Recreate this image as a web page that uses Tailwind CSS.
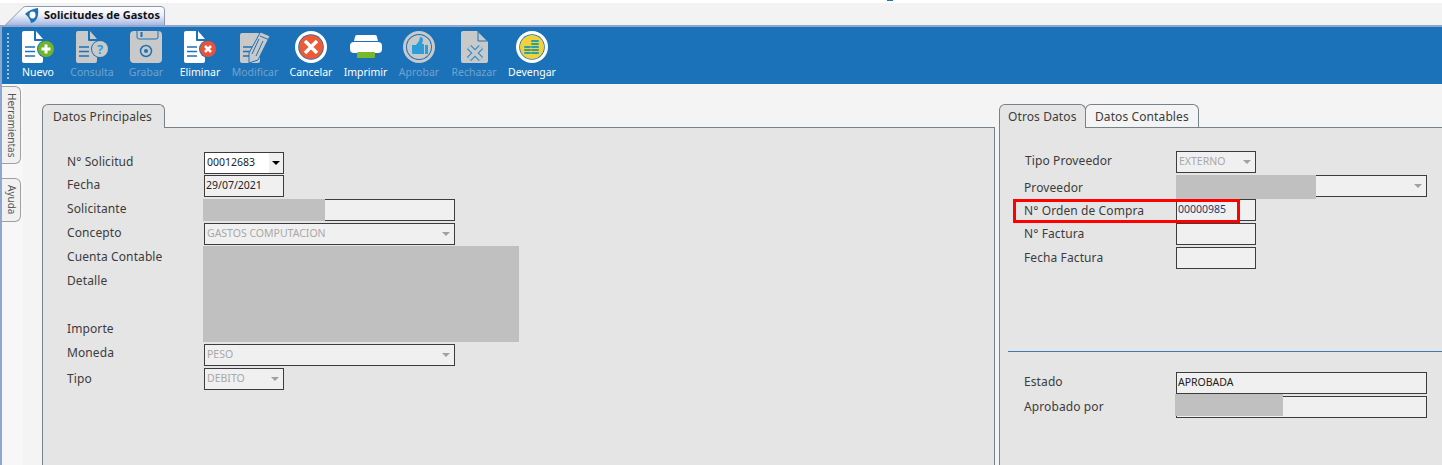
<!DOCTYPE html>
<html lang="es">
<head>
  <meta charset="UTF-8" />
  <title>Solicitudes de Gastos</title>
  <script src="https://cdn.jsdelivr.net/npm/@tailwindcss/browser@4"></script>
</head>
<body class="w-[1442px] h-[465px] overflow-hidden bg-[#f4f4f4] font-['Noto_Sans',sans-serif] text-[12px] tracking-[0.1px] text-[#3c3c3c]">

  <!-- tab strip -->
  <div class="relative h-[25px] border-t-[3px] border-white pl-[5px] pt-[3px] bg-[#f3f3f3]">
    <div class="absolute left-[887px] -top-[3px] w-[6px] h-[1px] bg-[#1c72b8]"></div>
    <div class="relative w-[161px] h-[19px] flex items-center pl-[20px] gap-[5px]">
      <svg class="absolute left-0 top-0" width="161" height="19" viewBox="0 0 161 19">
        <defs><linearGradient id="tabfill" x1="0" y1="0" x2="0" y2="1"><stop offset="0" stop-color="#ffffff"/><stop offset="0.45" stop-color="#eef1fa"/><stop offset="1" stop-color="#a6b9e4"/></linearGradient></defs>
        <path d="M0.5 19 L18 1.5 Q19 0.5 21 0.5 H156 Q159.5 0.5 159.5 4 V19" fill="url(#tabfill)" stroke="#8c98a8"/>
      </svg>
      <svg class="relative" width="14" height="16" viewBox="0 0 14 16"><path d="M0 6 Q5 1 13 0 Q14 8 11 12 Q9 15 6 15 Q5 10 0 6 Z" fill="#1c72b8"/><ellipse cx="7.500" cy="7" rx="3" ry="3.400" fill="#fff"/></svg>
      <span class="relative font-bold text-[#111] text-[11px] tracking-normal whitespace-nowrap">Solicitudes de Gastos</span>
    </div>
  </div>

  <div class="border-l-2 border-[#8fa6d0] border-t-2 border-t-[#8fa6d0] h-[440px]">
    <!-- toolbar -->
    <div class="h-[57px] bg-[#1c72b8] flex pl-[5px] pt-[3px] text-[10.5px] tracking-normal leading-[14px] text-white">
      <div class="w-[3px] h-[46px] mt-[3px] mr-[1px] border-l-2 border-dotted border-[#9cc0dd]"></div>
      <div class="w-[54px] flex flex-col items-center">
        <svg width="40" height="35" viewBox="0 0 40 35"><path d="M6 1h10v9a1 1 0 0 0 1 1h8v20a2 2 0 0 1-2 2H6a2 2 0 0 1-2-2V3a2 2 0 0 1 2-2z" fill="#fff"/><path d="M18 1l7 8h-7z" fill="#fff"/><path d="M7 17h10M7 21.500h10M7 26h10" stroke="#1c72b8" stroke-width="1.500"/><circle cx="28" cy="19" r="9" fill="#1c72b8"/><circle cx="28" cy="19" r="8" fill="#6fb52c"/><path d="M28 14.500v9M23.500 19h9" stroke="#fff" stroke-width="3"/></svg>
        <span>Nuevo</span>
      </div>
      <div class="w-[54px] flex flex-col items-center text-[#6fa3cf]">
        <svg width="40" height="35" viewBox="0 0 40 35"><path d="M6 1h10v9a1 1 0 0 0 1 1h8v20a2 2 0 0 1-2 2H6a2 2 0 0 1-2-2V3a2 2 0 0 1 2-2z" fill="#c9c9c9"/><path d="M18 1l7 8h-7z" fill="#c9c9c9"/><path d="M7 17h10M7 21.500h10M7 26h10" stroke="#1c72b8" stroke-width="1.500"/><circle cx="28" cy="19" r="9" fill="#1c72b8"/><circle cx="28" cy="19" r="8" fill="#c9c9c9"/><text x="28" y="23.500" font-size="13" font-weight="bold" fill="#2b9fdc" text-anchor="middle">?</text></svg>
        <span>Consulta</span>
      </div>
      <div class="w-[54px] flex flex-col items-center text-[#6fa3cf]">
        <svg width="40" height="35" viewBox="0 0 40 35"><path d="M8 1h24a4 4 0 0 1 4 4v24a4 4 0 0 1-4 4H8a4 4 0 0 1-4-4V5a4 4 0 0 1 4-4z" fill="#c9c9c9"/><path d="M11 1v6a2 2 0 0 0 2 2h17a2 2 0 0 0 2-2V1" fill="none" stroke="#1c72b8"/><rect x="14.500" y="2" width="2" height="5" fill="#1c72b8"/><circle cx="20" cy="21" r="5.500" fill="none" stroke="#1c72b8" stroke-width="1.500"/><circle cx="20" cy="21" r="2" fill="#1c72b8"/></svg>
        <span>Grabar</span>
      </div>
      <div class="w-[54px] flex flex-col items-center">
        <svg width="40" height="35" viewBox="0 0 40 35"><path d="M6 1h10v9a1 1 0 0 0 1 1h8v20a2 2 0 0 1-2 2H6a2 2 0 0 1-2-2V3a2 2 0 0 1 2-2z" fill="#fff"/><path d="M18 1l7 8h-7z" fill="#fff"/><path d="M7 17h10M7 21.500h10M7 26h10" stroke="#1c72b8" stroke-width="1.500"/><circle cx="28" cy="19" r="9" fill="#1c72b8"/><circle cx="28" cy="19" r="8" fill="#e8533a"/><path d="M25 16l6 6M31 16l-6 6" stroke="#fff" stroke-width="2.500"/></svg>
        <span>Eliminar</span>
      </div>
      <div class="w-[56px] flex flex-col items-center text-[#6fa3cf]">
        <svg width="40" height="35" viewBox="0 0 40 35"><path d="M7 3h16a2 2 0 0 1 2 2v26a2 2 0 0 1-2 2H7a2 2 0 0 1-2-2V5a2 2 0 0 1 2-2z" fill="#c9c9c9"/><path d="M8 17h9M8 21.500h9M8 26h9" stroke="#1c72b8" stroke-width="1.500"/><path d="M25.500 2l9.500 4-12 24-9 3 0-10z" fill="#c9c9c9" stroke="#1c72b8"/><path d="M25 6l8.500 3.500M24 9l-7 15M28 11l-7 15" stroke="#1c72b8" fill="none"/></svg>
        <span>Modificar</span>
      </div>
      <div class="w-[56px] flex flex-col items-center">
        <svg width="40" height="35" viewBox="0 0 40 35"><circle cx="20" cy="17" r="16" fill="#fff"/><circle cx="20" cy="17" r="12.800" fill="#1c72b8"/><circle cx="20" cy="17" r="12" fill="#ee5a35"/><path d="M14 11l12 12M26 11l-12 12" stroke="#fff" stroke-width="3.500"/></svg>
        <span>Cancelar</span>
      </div>
      <div class="w-[53px] flex flex-col items-center">
        <svg width="40" height="35" viewBox="0 0 40 35"><path d="M9 7a2 2 0 0 1 2-2h18a2 2 0 0 1 2 2l1 4H8z" fill="#fff"/><rect x="4" y="12" width="32" height="11" rx="4" fill="#fff"/><rect x="11" y="22" width="18" height="6" rx="1" fill="#78b82a"/></svg>
        <span>Imprimir</span>
      </div>
      <div class="w-[54px] flex flex-col items-center text-[#6fa3cf]">
        <svg width="40" height="35" viewBox="0 0 40 35"><circle cx="20" cy="17" r="14.500" fill="none" stroke="#c9c9c9" stroke-width="3"/><circle cx="20" cy="17" r="12" fill="#c9c9c9"/><path d="M13 15h4l3-4 1-4c2 0 3 1 3 3l-1 4h2v10H14a1 1 0 0 1-1-1z" fill="#2b9fdc"/><rect x="26" y="15" width="3" height="9" fill="#2b9fdc"/></svg>
        <span>Aprobar</span>
      </div>
      <div class="w-[56px] flex flex-col items-center text-[#6fa3cf]">
        <svg width="40" height="35" viewBox="0 0 40 35"><path d="M9 1h14l11 11v19a2 2 0 0 1-2 2H9a2 2 0 0 1-2-2V3a2 2 0 0 1 2-2z" fill="#c9c9c9"/><path d="M24 2v9h9" fill="none" stroke="#1c72b8"/><path d="M15 17l12 12M27 17l-12 12" stroke="#2b8fd0" stroke-width="6"/><path d="M15 17l12 12M27 17l-12 12" stroke="#c9c9c9" stroke-width="3.500"/></svg>
        <span>Rechazar</span>
      </div>
      <div class="w-[60px] flex flex-col items-center">
        <svg width="40" height="35" viewBox="0 0 40 35"><circle cx="20" cy="17" r="16" fill="#fff"/><circle cx="20" cy="17" r="12.800" fill="#1c72b8"/><circle cx="20" cy="17" r="12" fill="#f2d23c"/><g fill="#2f9fa0"><rect x="12" y="16" width="7" height="2" rx="1"/><rect x="12" y="19" width="7" height="2" rx="1"/><rect x="12" y="22" width="7" height="2" rx="1"/><rect x="19" y="10" width="8" height="2" rx="1"/><rect x="19" y="13" width="8" height="2" rx="1"/><rect x="19" y="16" width="8" height="2" rx="1"/><rect x="19" y="19" width="8" height="2" rx="1"/><rect x="19" y="22" width="8" height="2" rx="1"/></g></svg>
        <span>Devengar</span>
      </div>
    </div>

    <div class="flex h-[381px]">
      <!-- side tabs -->
      <div class="w-[21px] pt-[2px] bg-[#f7f7f7] text-[10px] tracking-normal text-[#555]">
        <div class="w-[19px] h-[78px] rounded-r-md border border-l-0 border-[#a0a0a0] bg-[#f1f1f1] flex items-center justify-center">
          <span class="[writing-mode:vertical-rl]">Herramientas</span>
        </div>
        <div class="w-[19px] h-[44px] mt-[14px] rounded-r-md border border-l-0 border-[#a0a0a0] bg-[#f1f1f1] flex items-center justify-center">
          <span class="[writing-mode:vertical-rl]">Ayuda</span>
        </div>
      </div>

      <div class="flex-1 flex pl-[19px] pt-[20px]">
        <!-- left panel -->
        <div class="w-[953px] flex flex-col">
          <div class="relative z-10 h-[24px] w-[123px] rounded-t-md border border-b-0 border-[#75828c] bg-[#e5e5e5] flex items-center pl-[10px] pt-px">Datos Principales</div>
          <div class="relative flex-1 -mt-[1px] border border-b-0 border-[#75828c] bg-[#e5e5e5] pt-[24px] pl-[24px]">
            <div class="h-[23px] flex"><span class="w-[137px] leading-[20px]">N° Solicitud</span>
              <div class="w-[80px] h-[22px] border border-[#3c3c3c] bg-white flex justify-between items-center pl-[2px] text-[10.5px] tracking-normal text-[#222]">00012683
                <div class="w-[14px] h-[20px] bg-[#f0f0f0] flex items-center justify-center"><span class="w-0 h-0 border-x-[4px] border-t-[4px] border-x-transparent border-t-black"></span></div>
              </div>
            </div>
            <div class="h-[24px] flex"><span class="w-[137px] leading-[20px]">Fecha</span>
              <div class="w-[80px] h-[22px] border border-[#3c3c3c] bg-[#f0f0f0] flex items-center pl-[1px] text-[10.5px] tracking-normal text-[#222]">29/07/2021</div>
            </div>
            <div class="h-[24px] flex"><span class="w-[137px] leading-[20px]">Solicitante</span>
              <div class="relative w-[251px] h-[22px] border border-[#3c3c3c] bg-[#f0f0f0]">
                <div class="absolute -left-[2px] -top-px w-[122px] h-[22px] bg-[#c0c0c0]"></div>
              </div>
            </div>
            <div class="h-[24px] flex"><span class="w-[137px] leading-[20px]">Concepto</span>
              <div class="w-[251px] h-[22px] border border-[#3c3c3c] bg-[#f0f0f0] flex justify-between items-center pl-[2px] pr-[4px] text-[10.5px] tracking-normal text-[#a8a8a8]">GASTOS COMPUTACION
                <span class="w-0 h-0 border-x-[4px] border-t-[4px] border-x-transparent border-t-[#a0a0a0]"></span>
              </div>
            </div>
            <div class="h-[24px] leading-[20px]">Cuenta Contable</div>
            <div class="h-[48px] leading-[20px]">Detalle</div>
            <div class="h-[25px] leading-[20px]">Importe</div>
            <div class="absolute left-[160px] top-[118px] w-[316px] h-[96px] bg-[#c0c0c0]"></div>
            <div class="h-[24px] flex"><span class="w-[137px] leading-[20px] -mt-px">Moneda</span>
              <div class="w-[251px] h-[22px] border border-[#3c3c3c] bg-[#f0f0f0] flex justify-between items-center pl-[2px] pr-[4px] text-[10.5px] tracking-normal text-[#a8a8a8]">PESO
                <span class="w-0 h-0 border-x-[4px] border-t-[4px] border-x-transparent border-t-[#a0a0a0]"></span>
              </div>
            </div>
            <div class="h-[24px] flex"><span class="w-[137px] leading-[20px] mt-px">Tipo</span>
              <div class="w-[80px] h-[22px] border border-[#3c3c3c] bg-[#f0f0f0] flex justify-between items-center pl-[2px] pr-[4px] text-[10.5px] tracking-normal text-[#a8a8a8]">DEBITO
                <span class="w-0 h-0 border-x-[4px] border-t-[4px] border-x-transparent border-t-[#a0a0a0]"></span>
              </div>
            </div>
          </div>
        </div>

        <!-- right panel -->
        <div class="flex-1 flex flex-col ml-[4px]">
          <div class="relative z-10 flex h-[24px]">
            <div class="w-[87px] rounded-t-md border border-b-0 border-[#75828c] bg-[#e5e5e5] flex items-center pl-[8px] pt-px">Otros Datos</div>
            <div class="w-[114px] h-[23px] -ml-px rounded-t-md border border-b-0 border-[#75828c] bg-[#f4f4f4] flex items-center pl-[9px] pt-[2px]">Datos Contables</div>
          </div>
          <div class="relative flex-1 -mt-[1px] border-t border-l border-[#75828c] bg-[#e5e5e5] pt-[23px] pl-[24px]">
            <div class="h-[24px] flex"><span class="w-[152px] pl-px leading-[20px]">Tipo Proveedor</span>
              <div class="w-[80px] h-[22px] border border-[#3c3c3c] bg-[#f0f0f0] flex justify-between items-center pl-[2px] pr-[4px] text-[10.5px] tracking-normal text-[#a8a8a8]">EXTERNO
                <span class="w-0 h-0 border-x-[4px] border-t-[4px] border-x-transparent border-t-[#a0a0a0]"></span>
              </div>
            </div>
            <div class="h-[24px] flex"><span class="w-[152px] leading-[20px] mt-[3px]">Proveedor</span>
              <div class="relative w-[251px] h-[22px] border border-[#3c3c3c] bg-[#f0f0f0] flex justify-end items-center pr-[4px]">
                <div class="absolute -left-px -top-px w-[140px] h-[24px] bg-[#c0c0c0]"></div>
                <span class="w-0 h-0 border-x-[4px] border-t-[4px] border-x-transparent border-t-[#a0a0a0]"></span>
              </div>
            </div>
            <div class="relative h-[24px] flex"><span class="w-[152px] leading-[20px] mt-[2px]">N° Orden de Compra</span>
              <div class="w-[80px] h-[22px] border border-[#3c3c3c] bg-[#f0f0f0] flex items-center pl-px text-[10.5px] tracking-normal text-[#1f3a6e]">00000985</div>
              <div class="absolute -left-[11px] top-0 w-[227px] h-[24px] border-[3px] border-[#ff0000]"></div>
            </div>
            <div class="h-[24px] flex"><span class="w-[152px] leading-[20px] mt-px">N° Factura</span>
              <div class="w-[80px] h-[22px] border border-[#3c3c3c] bg-[#f0f0f0]"></div>
            </div>
            <div class="h-[24px] flex"><span class="w-[152px] leading-[20px] mt-px">Fecha Factura</span>
              <div class="w-[80px] h-[22px] border border-[#3c3c3c] bg-[#f0f0f0]"></div>
            </div>

            <div class="h-px -ml-[16px] mt-[80px] bg-[#3a7cb4]"></div>

            <div class="h-[24px] mt-[20px] flex"><span class="w-[152px] leading-[20px]">Estado</span>
              <div class="w-[251px] h-[22px] border border-[#3c3c3c] bg-[#f0f0f0] flex items-center pl-px text-[10.5px] tracking-normal text-[#222]">APROBADA</div>
            </div>
            <div class="h-[24px] flex"><span class="w-[152px] leading-[20px] mt-px">Aprobado por</span>
              <div class="relative w-[251px] h-[22px] border border-[#3c3c3c] bg-[#f0f0f0]">
                <div class="absolute -left-[2px] -top-[3px] w-[108px] h-[22px] bg-[#c0c0c0]"></div>
              </div>
            </div>
          </div>
        </div>
      </div>
    </div>
  </div>
</body>
</html>
